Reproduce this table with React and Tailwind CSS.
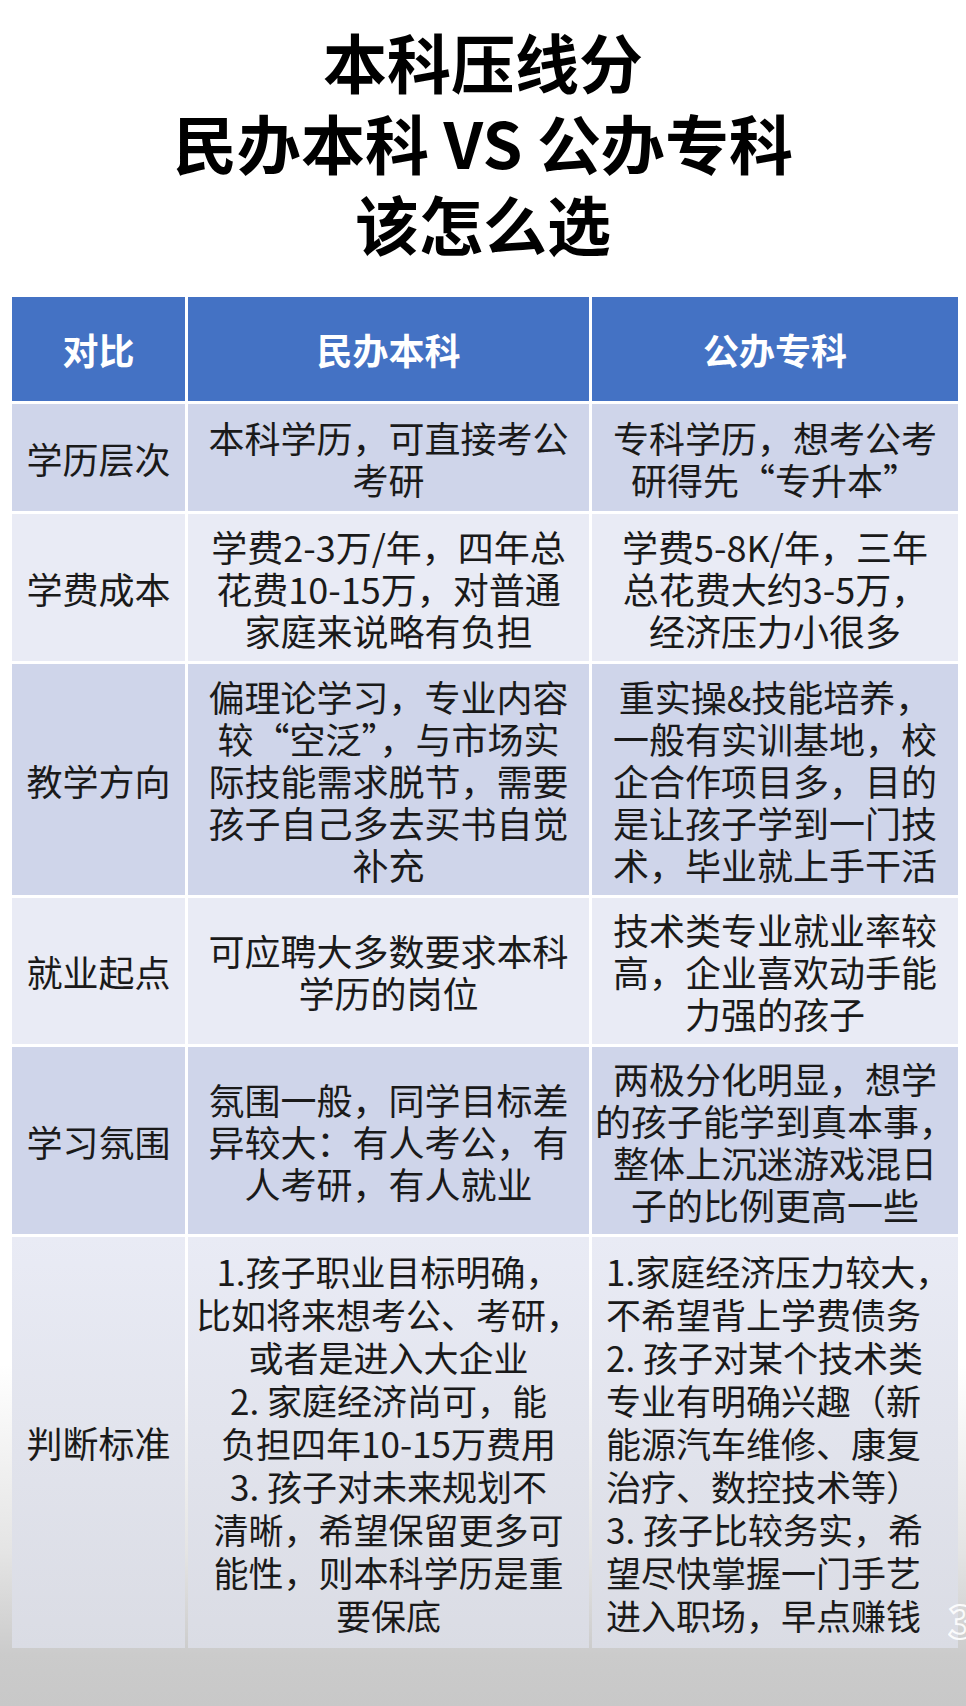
import React from "react";

const rows = [
  {
    label: "学历层次",
    h: "h-[107px]",
    bg: "bg-[#cfd5ea]",
    a: ["本科学历，可直接考公", "考研"],
    b: ["专科学历，想考公考", "研得先“专升本”"],
  },
  {
    label: "学费成本",
    h: "h-[147px]",
    bg: "bg-[#e9ebf5]",
    a: ["学费2-3万/年，四年总", "花费10-15万，对普通", "家庭来说略有负担"],
    b: ["学费5-8K/年，三年", "总花费大约3-5万，", "经济压力小很多"],
  },
  {
    label: "教学方向",
    h: "h-[231px]",
    bg: "bg-[#cfd5ea]",
    a: ["偏理论学习，专业内容", "较“空泛”，与市场实", "际技能需求脱节，需要", "孩子自己多去买书自觉", "补充"],
    b: ["重实操&技能培养，", "一般有实训基地，校", "企合作项目多，目的", "是让孩子学到一门技", "术，毕业就上手干活"],
  },
  {
    label: "就业起点",
    h: "h-[146px]",
    bg: "bg-[#e9ebf5]",
    a: ["可应聘大多数要求本科", "学历的岗位"],
    b: ["技术类专业就业率较", "高，企业喜欢动手能", "力强的孩子"],
  },
  {
    label: "学习氛围",
    h: "h-[187px]",
    bg: "bg-[#cfd5ea]",
    a: ["氛围一般，同学目标差", "异较大：有人考公，有", "人考研，有人就业"],
    b: ["两极分化明显，想学", "的孩子能学到真本事，", "整体上沉迷游戏混日", "子的比例更高一些"],
  },
];

const lastA = [
  "1.孩子职业目标明确，",
  "比如将来想考公、考研，",
  "或者是进入大企业",
  "2. 家庭经济尚可，能",
  "负担四年10-15万费用",
  "3. 孩子对未来规划不",
  "清晰，希望保留更多可",
  "能性，则本科学历是重",
  "要保底",
];

const lastB = [
  "1.家庭经济压力较大，",
  "不希望背上学费债务",
  "2. 孩子对某个技术类",
  "专业有明确兴趣（新",
  "能源汽车维修、康复",
  "治疗、数控技术等）",
  "3. 孩子比较务实，希",
  "望尽快掌握一门手艺",
  "进入职场，早点赚钱",
];

function Lines({ lines, className = "" }) {
  return (
    <div className={className}>
      {lines.map((l, i) => (
        <div key={i} className="whitespace-nowrap">{l}</div>
      ))}
    </div>
  );
}

export default function App() {
  return (
    <div
      className="w-[966px] h-[1706px] overflow-hidden bg-[linear-gradient(to_bottom,#ffffff_0%,#ffffff_80%,#e4e4e4_91%,#cbcbcb_97%,#c8c8c8_100%)] text-[#1a1a1a]"
      style={{ fontFamily: '"Noto Sans CJK SC", "Noto Sans", sans-serif' }}
    >
      {/* Title */}
      <div className="pt-[20px] text-center font-bold text-black text-[64px] leading-[81px]">
        <div>本科压线分</div>
        <div>民办本科 VS 公办专科</div>
        <div>该怎么选</div>
      </div>

      {/* Table */}
      <div className="relative mt-[34px] ml-[12px] w-[946px] grid grid-cols-[173px_401px_366px] gap-[3px]">
        <div className="h-[104px] bg-[#4472c4] flex items-center justify-center text-white font-bold text-[36px]">对比</div>
        <div className="h-[104px] bg-[#4472c4] flex items-center justify-center text-white font-bold text-[36px]">民办本科</div>
        <div className="h-[104px] bg-[#4472c4] flex items-center justify-center text-white font-bold text-[36px]">公办专科</div>

        {rows.map((r) => (
          <React.Fragment key={r.label}>
            <div className={`${r.h} ${r.bg} flex items-center justify-center text-[36px] leading-[42px]`}>{r.label}</div>
            <div className={`${r.h} ${r.bg} flex items-center justify-center text-center text-[36px] leading-[42px]`}>
              <Lines lines={r.a} />
            </div>
            <div className={`${r.h} ${r.bg} flex items-center justify-center text-center text-[36px] leading-[42px]`}>
              <Lines lines={r.b} />
            </div>
          </React.Fragment>
        ))}

        <div className="h-[411px] bg-[linear-gradient(to_bottom,#e9ebf5,#dadce4)] flex items-center justify-center text-[36px] leading-[43px]">判断标准</div>
        <div className="h-[411px] bg-[linear-gradient(to_bottom,#e9ebf5,#dadce4)] flex items-center justify-center text-center text-[35px] leading-[43px]">
          <Lines lines={lastA} />
        </div>
        <div className="h-[411px] bg-[linear-gradient(to_bottom,#e9ebf5,#dadce4)] flex items-center pl-[14px] text-left text-[35px] leading-[43px]">
          <Lines lines={lastB} />
        </div>

        <span className="absolute right-[-16px] bottom-[-4px] text-[44px] font-bold text-transparent [-webkit-text-stroke:2px_#ffffff] opacity-90">3</span>
      </div>
    </div>
  );
}
